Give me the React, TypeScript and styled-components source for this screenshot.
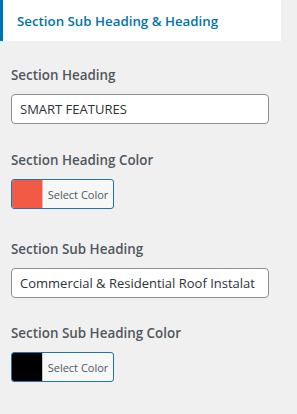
import styled, { createGlobalStyle } from "styled-components";

const Global = createGlobalStyle`
  html, body {
    margin: 0;
    padding: 0;
    background: #f0f0f0;
  }
  body {
    font-family: "Open Sans", "Noto Sans", sans-serif;
  }
`

const Panel = styled.div`
  width: 297px;
  height: 414px;
  background: #f0f0f0;
  display: flex;
  flex-direction: column;
`

const Tab = styled.div`
  width: 281px;
  height: 41px;
  box-sizing: border-box;
  background: #fff;
  border-left: 3px solid #0073aa;
  padding-left: 14px;
  display: flex;
  align-items: center;
  color: #0073aa;
  font-size: 13.3px;
  font-weight: 600;
`

const Fields = styled.div`
  display: flex;
  flex-direction: column;
  padding: 24px 0 0 11px;
`

const Field = styled.div<{ gap?: number }>`
  display: flex;
  flex-direction: column;
  margin-bottom: ${p => p.gap ?? 26}px;
`

const Label = styled.label`
  color: #50575e;
  font-size: 13.4px;
  font-weight: 600;
  line-height: 20px;
  margin-bottom: 9px;
`

const TextInput = styled.input`
  width: 258px;
  height: 30px;
  box-sizing: border-box;
  border: 1px solid #8c8f94;
  border-radius: 4px;
  background: #fff;
  padding: 0 6px 0 8px;
  font-family: "Open Sans", "Noto Sans", sans-serif;
  font-size: 13px;
  color: #2c3338;
  outline: none;
`

const ColorButton = styled.button`
  width: 103px;
  height: 30px;
  box-sizing: border-box;
  border: 1px solid #2271b1;
  border-radius: 3px;
  background: #f6f7f7;
  padding: 0;
  display: flex;
  align-items: stretch;
  overflow: hidden;
  cursor: pointer;
`

const Swatch = styled.span<{ color: string }>`
  width: 30px;
  background: ${p => p.color};
  border-right: 1px solid #c3c4c7;
`

const ButtonText = styled.span`
  flex: 1;
  display: flex;
  align-items: center;
  justify-content: center;
  font-family: "Open Sans", "Noto Sans", sans-serif;
  font-size: 11px;
  color: #50575e;
`

export default function App() {
  return (
    <Panel>
      <Global />
      <Tab>Section Sub Heading &amp; Heading</Tab>
      <Fields>
        <Field>
          <Label>Section Heading</Label>
          <TextInput defaultValue="SMART FEATURES" />
        </Field>
        <Field gap={30}>
          <Label>Section Heading Color</Label>
          <ColorButton>
            <Swatch color="#f25a45" />
            <ButtonText>Select Color</ButtonText>
          </ColorButton>
        </Field>
        <Field gap={25}>
          <Label>Section Sub Heading</Label>
          <TextInput defaultValue="Commercial & Residential Roof Instalat" />
        </Field>
        <Field>
          <Label>Section Sub Heading Color</Label>
          <ColorButton>
            <Swatch color="#000" />
            <ButtonText>Select Color</ButtonText>
          </ColorButton>
        </Field>
      </Fields>
    </Panel>
  )
}
